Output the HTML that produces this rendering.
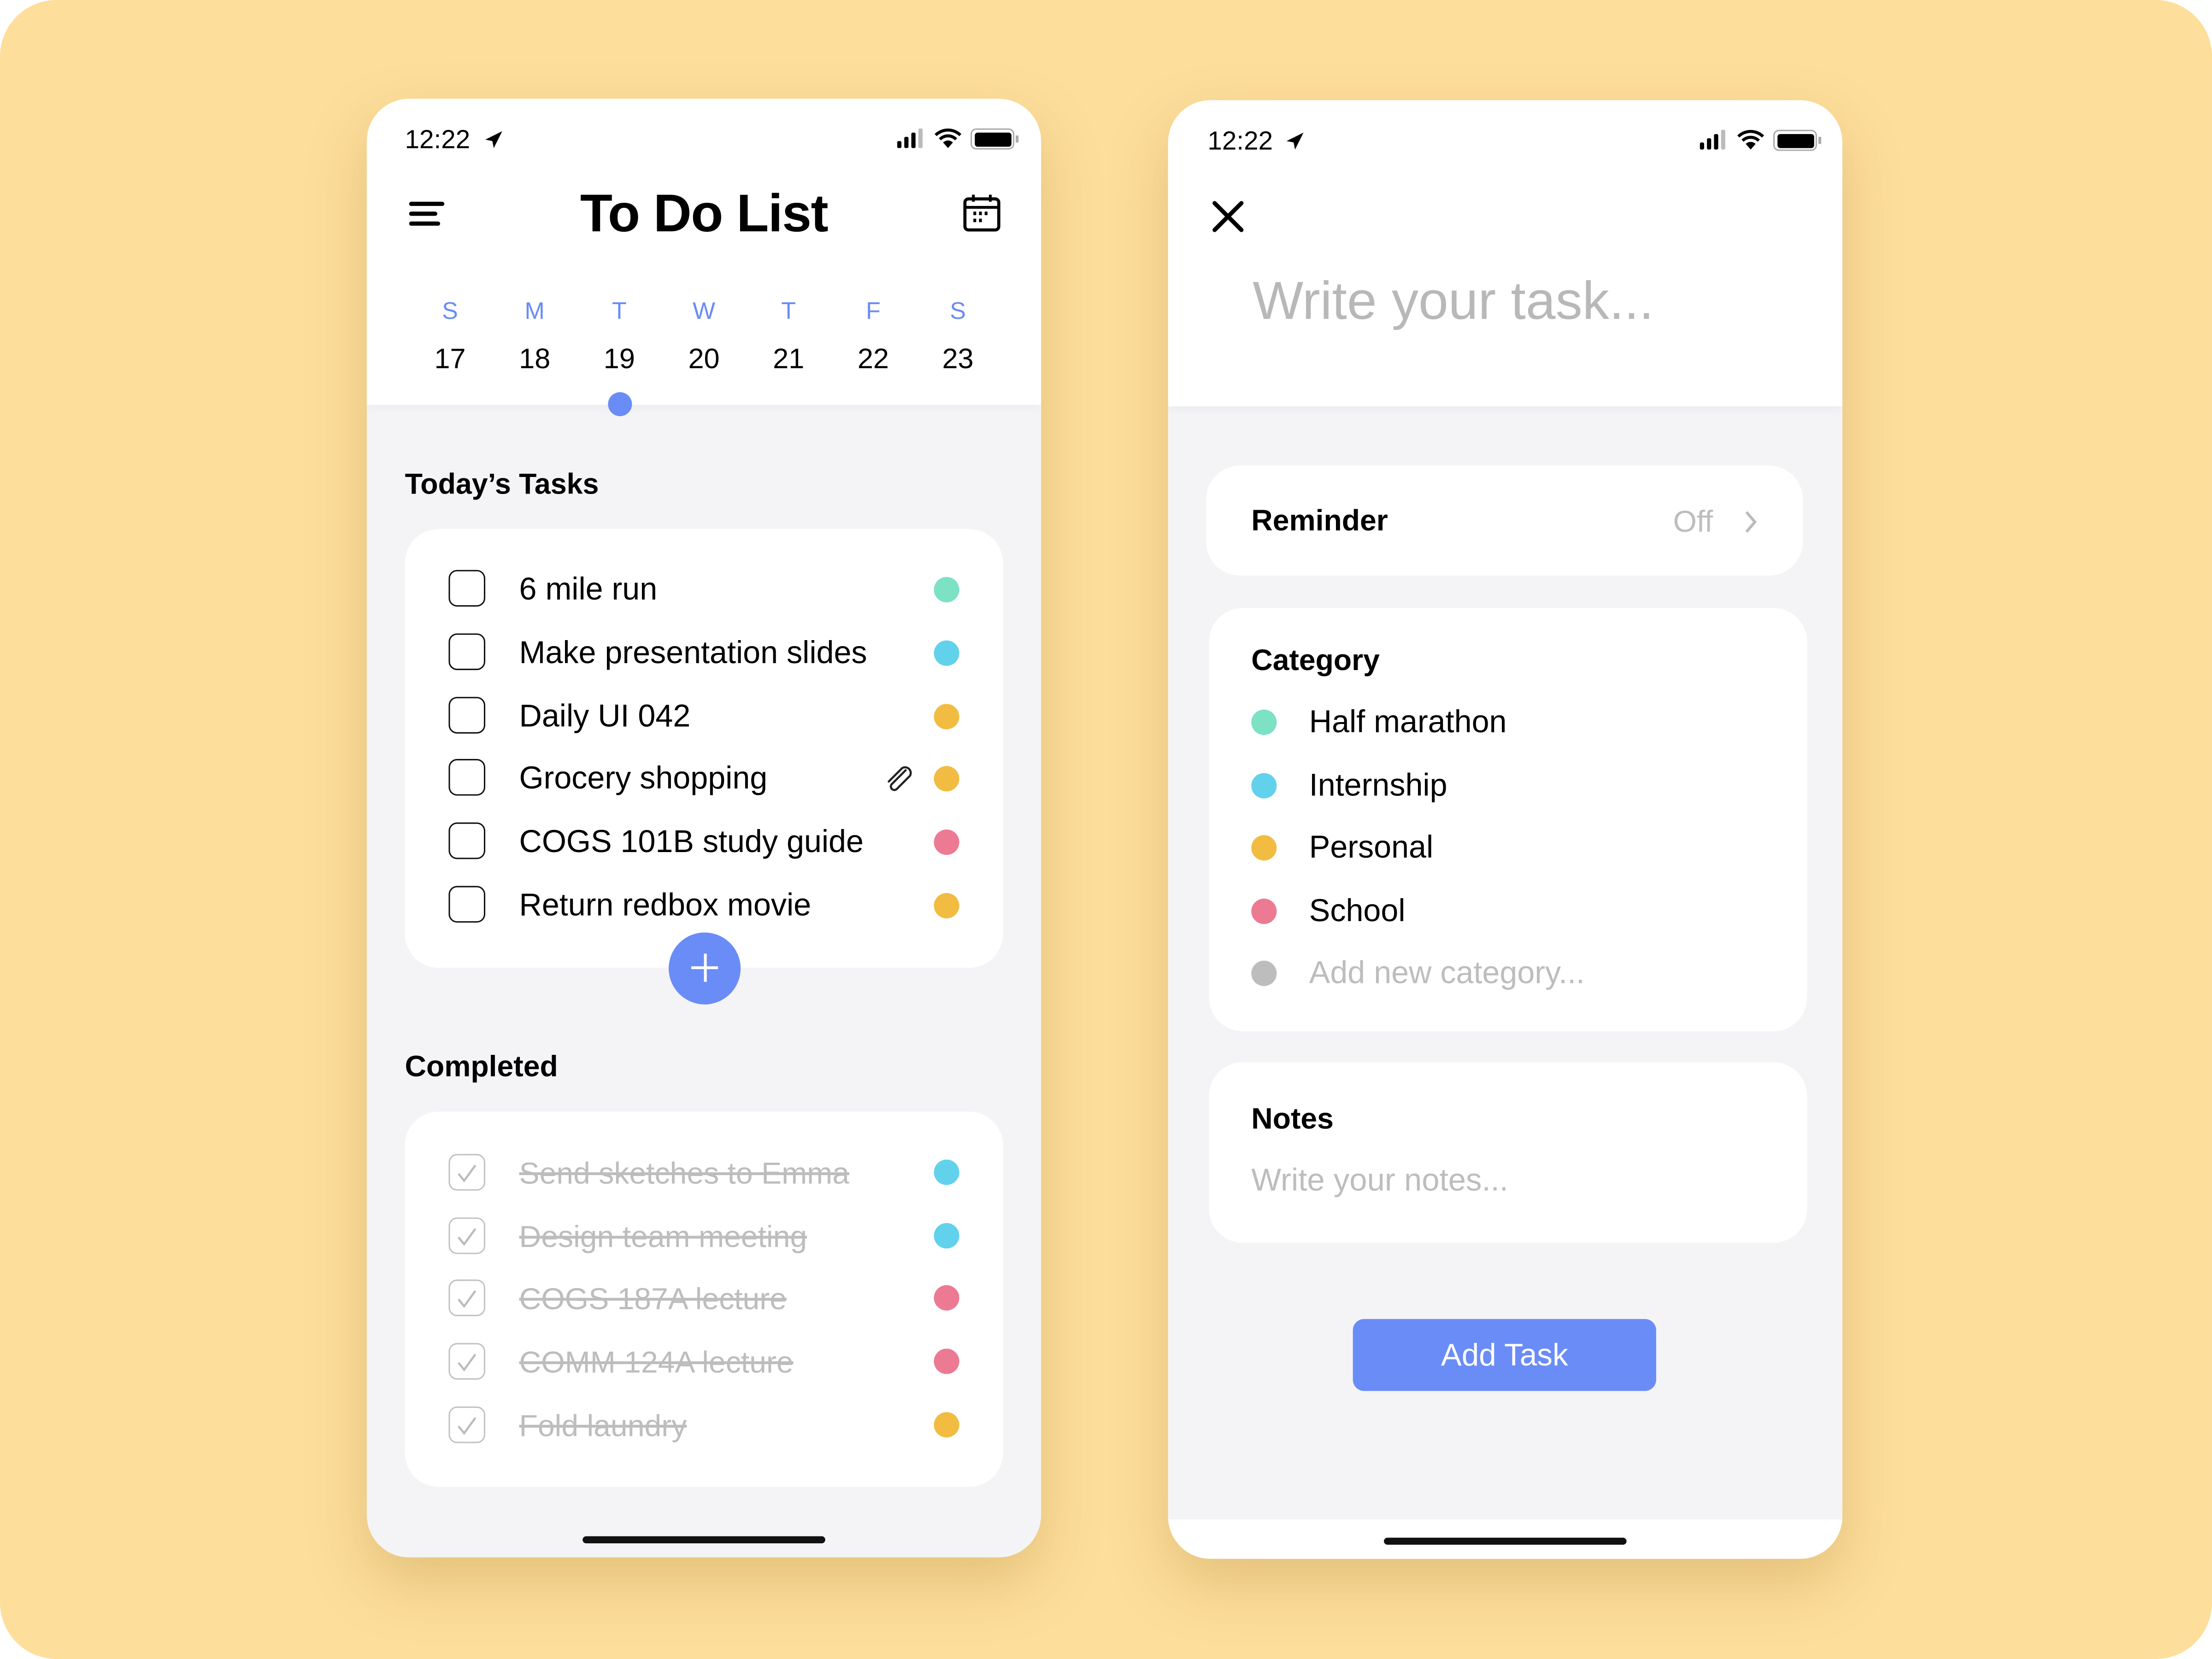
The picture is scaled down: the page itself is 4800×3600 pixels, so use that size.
<!DOCTYPE html>
<html><head><meta charset="utf-8"><style>
*{margin:0;padding:0;box-sizing:border-box}
html,body{width:4800px;height:3600px;overflow:hidden;background:#fff}
#s{position:absolute;left:0;top:0;width:1568px;height:1176px;transform:scale(3.0612);transform-origin:0 0;background:#FDDE9B;border-radius:40px;font-family:"Liberation Sans",sans-serif;color:#000}
.a{position:absolute}
.ph{position:absolute;width:478px;height:1034px;border-radius:30px;background:#F4F4F6;overflow:hidden;box-shadow:0 18px 50px rgba(160,120,40,0.28)}
.top{position:absolute;left:0;top:0;width:100%;height:217px;background:#fff;box-shadow:0 2px 6px rgba(0,0,0,0.04)}
.t{position:absolute;height:30px;line-height:30px;white-space:nowrap}
.card{position:absolute;background:#fff;border-radius:24px}
.cb{position:absolute;width:26px;height:26px;border:1.6px solid #111;border-radius:6px}
.cb.d{border-color:#c2c2c2}
.dot{position:absolute;width:18px;height:18px;border-radius:50%}
.g{background:#7DE1C4}.c{background:#62D1EC}.y{background:#F2BC42}.p{background:#EC7A93}.gr{background:#BDBDBD}
.done{color:#bdbdbd;text-decoration:line-through;text-decoration-color:#bdbdbd}
.hi{position:absolute;width:172px;height:5px;border-radius:3px;background:#111;bottom:10px}
.tk{font-size:22.3px}
.ct{font-size:21.6px}
</style></head><body><div id="s">

<!-- LEFT PHONE -->
<div class="ph" style="left:260px;top:70px">
 <div class="top" style="height:217px"></div>
 <div class="t" style="left:27px;top:14px;font-size:18.5px">12:22</div>
 <svg class="a" style="left:82px;top:21px" width="16" height="16" viewBox="0 0 16 16"><path d="M14 2 L2 8 L7 9 L8 14 Z" fill="#000"/></svg>
 <svg class="a" style="left:375px;top:21px" width="24" height="14" viewBox="0 0 24 14"><rect x="1" y="9" width="3" height="5" rx="1"/><rect x="6" y="6" width="3" height="8" rx="1"/><rect x="11" y="3" width="3" height="11" rx="1"/><rect x="16" y="0" width="3" height="14" rx="1" fill="#bbb"/></svg>
 <svg class="a" style="left:402px;top:20px" width="20" height="16" viewBox="0 0 20 16"><path d="M10 15 L6.5 11 A5 5 0 0 1 13.5 11 Z M3.5 8 A9 9 0 0 1 16.5 8 L15 9.5 A7 7 0 0 0 5 9.5 Z M0.5 5 A13.5 13.5 0 0 1 19.5 5 L18 6.5 A11.5 11.5 0 0 0 2 6.5 Z" fill="#000"/></svg>
 <div class="a" style="left:428px;top:21px;width:31px;height:15px;border:1.5px solid #aaa;border-radius:4px;padding:1.5px"><div style="width:100%;height:100%;background:#000;border-radius:2px"></div></div>
 <div class="a" style="left:460px;top:26px;width:2px;height:5px;background:#aaa"></div>
 <div class="a" style="left:30px;top:73px;width:25px;height:3px;background:#000;border-radius:2px"></div>
 <div class="a" style="left:30px;top:80px;width:20px;height:3px;background:#000;border-radius:2px"></div>
 <div class="a" style="left:30px;top:87px;width:22px;height:3px;background:#000;border-radius:2px"></div>
 <div class="t" style="left:0;width:478px;text-align:center;top:60px;height:42px;line-height:42px;font-size:37.5px;font-weight:bold;letter-spacing:-0.5px">To Do List</div>
 <svg class="a" style="left:422px;top:67px" width="28" height="28" viewBox="0 0 28 28"><rect x="2" y="4" width="24" height="22" rx="2.5" fill="none" stroke="#000" stroke-width="2.2"/><line x1="2" y1="10" x2="26" y2="10" stroke="#000" stroke-width="2"/><line x1="8" y1="1" x2="8" y2="6" stroke="#000" stroke-width="2"/><line x1="20" y1="1" x2="20" y2="6" stroke="#000" stroke-width="2"/><rect x="8" y="13" width="2" height="2.5"/><rect x="12" y="13" width="2" height="2.5"/><rect x="16" y="13" width="2" height="2.5"/><rect x="8" y="18" width="2" height="2.5"/><rect x="12" y="18" width="2" height="2.5"/></svg>
 <div class="a" style="left:29px;top:136px;width:420px;font-size:17px;color:#6A8CF7">
  <span class="t" style="left:0;width:60px;text-align:center">S</span><span class="t" style="left:60px;width:60px;text-align:center">M</span><span class="t" style="left:120px;width:60px;text-align:center">T</span><span class="t" style="left:180px;width:60px;text-align:center">W</span><span class="t" style="left:240px;width:60px;text-align:center">T</span><span class="t" style="left:300px;width:60px;text-align:center">F</span><span class="t" style="left:360px;width:60px;text-align:center">S</span>
 </div>
 <div class="a" style="left:29px;top:170px;width:420px;font-size:20px">
  <span class="t" style="left:0;width:60px;text-align:center">17</span><span class="t" style="left:60px;width:60px;text-align:center">18</span><span class="t" style="left:120px;width:60px;text-align:center">19</span><span class="t" style="left:180px;width:60px;text-align:center">20</span><span class="t" style="left:240px;width:60px;text-align:center">21</span><span class="t" style="left:300px;width:60px;text-align:center">22</span><span class="t" style="left:360px;width:60px;text-align:center">23</span>
 </div>
 <div class="a" style="left:171px;top:208px;width:17px;height:17px;border-radius:50%;background:#6A8CF7"></div>
 <div class="t" style="left:27px;top:259px;font-size:20.5px;font-weight:bold">Today’s Tasks</div>
 <div class="card" style="left:27px;top:305px;width:424px;height:311px"></div>
 <div class="cb" style="left:58px;top:334px"></div><div class="t tk" style="left:108px;top:333px">6 mile run</div><div class="dot g" style="left:402px;top:339px"></div>
 <div class="cb" style="left:58px;top:379px"></div><div class="t tk" style="left:108px;top:378px">Make presentation slides</div><div class="dot c" style="left:402px;top:384px"></div>
 <div class="cb" style="left:58px;top:424px"></div><div class="t tk" style="left:108px;top:423px">Daily UI 042</div><div class="dot y" style="left:402px;top:429px"></div>
 <div class="cb" style="left:58px;top:468px"></div><div class="t tk" style="left:108px;top:467px">Grocery shopping</div><div class="dot y" style="left:402px;top:473px"></div>
 <svg class="a" style="left:366px;top:472px" width="22" height="20" viewBox="0 0 22 20"><path d="M16 4 L6 14 A2.5 2.5 0 0 0 9.5 17.5 L19 8 A4 4 0 0 0 13.5 2.5 L4 12" fill="none" stroke="#222" stroke-width="1.5" stroke-linecap="round"/></svg>
 <div class="cb" style="left:58px;top:513px"></div><div class="t tk" style="left:108px;top:512px">COGS 101B study guide</div><div class="dot p" style="left:402px;top:518px"></div>
 <div class="cb" style="left:58px;top:558px"></div><div class="t tk" style="left:108px;top:557px">Return redbox movie</div><div class="dot y" style="left:402px;top:563px"></div>
 <div class="a" style="left:214px;top:591px;width:51px;height:51px;border-radius:50%;background:#6A8CF7"></div>
 <div class="a" style="left:230px;top:615px;width:19px;height:2px;background:#fff"></div>
 <div class="a" style="left:238.5px;top:606px;width:2px;height:20px;background:#fff"></div>
 <div class="t" style="left:27px;top:672px;font-size:21px;font-weight:bold">Completed</div>
 <div class="card" style="left:27px;top:718px;width:424px;height:266px"></div>
 <div class="cb d" style="left:58px;top:748px"></div><svg class="a" style="left:63px;top:755px" width="16" height="14"><path d="M2 7 L6 12 L14 1" fill="none" stroke="#bbb" stroke-width="1.5"/></svg><div class="t done ct" style="left:108px;top:747px">Send sketches to Emma</div><div class="dot c" style="left:402px;top:752px"></div>
 <div class="cb d" style="left:58px;top:793px"></div><svg class="a" style="left:63px;top:800px" width="16" height="14"><path d="M2 7 L6 12 L14 1" fill="none" stroke="#bbb" stroke-width="1.5"/></svg><div class="t done ct" style="left:108px;top:792px">Design team meeting</div><div class="dot c" style="left:402px;top:797px"></div>
 <div class="cb d" style="left:58px;top:837px"></div><svg class="a" style="left:63px;top:844px" width="16" height="14"><path d="M2 7 L6 12 L14 1" fill="none" stroke="#bbb" stroke-width="1.5"/></svg><div class="t done ct" style="left:108px;top:836px">COGS 187A lecture</div><div class="dot p" style="left:402px;top:841px"></div>
 <div class="cb d" style="left:58px;top:882px"></div><svg class="a" style="left:63px;top:889px" width="16" height="14"><path d="M2 7 L6 12 L14 1" fill="none" stroke="#bbb" stroke-width="1.5"/></svg><div class="t done ct" style="left:108px;top:881px">COMM 124A lecture</div><div class="dot p" style="left:402px;top:886px"></div>
 <div class="cb d" style="left:58px;top:927px"></div><svg class="a" style="left:63px;top:934px" width="16" height="14"><path d="M2 7 L6 12 L14 1" fill="none" stroke="#bbb" stroke-width="1.5"/></svg><div class="t done ct" style="left:108px;top:926px">Fold laundry</div><div class="dot y" style="left:402px;top:931px"></div>
 <div class="hi" style="left:153px"></div>
</div>

<!-- RIGHT PHONE -->
<div class="ph" style="left:828px;top:71px">
 <div class="top"></div>
 <div class="t" style="left:28px;top:14px;font-size:18.5px">12:22</div>
 <svg class="a" style="left:82px;top:21px" width="16" height="16" viewBox="0 0 16 16"><path d="M14 2 L2 8 L7 9 L8 14 Z" fill="#000"/></svg>
 <svg class="a" style="left:376px;top:21px" width="24" height="14" viewBox="0 0 24 14"><rect x="1" y="9" width="3" height="5" rx="1"/><rect x="6" y="6" width="3" height="8" rx="1"/><rect x="11" y="3" width="3" height="11" rx="1"/><rect x="16" y="0" width="3" height="14" rx="1" fill="#bbb"/></svg>
 <svg class="a" style="left:403px;top:20px" width="20" height="16" viewBox="0 0 20 16"><path d="M10 15 L6.5 11 A5 5 0 0 1 13.5 11 Z M3.5 8 A9 9 0 0 1 16.5 8 L15 9.5 A7 7 0 0 0 5 9.5 Z M0.5 5 A13.5 13.5 0 0 1 19.5 5 L18 6.5 A11.5 11.5 0 0 0 2 6.5 Z" fill="#000"/></svg>
 <div class="a" style="left:429px;top:21px;width:31px;height:15px;border:1.5px solid #aaa;border-radius:4px;padding:1.5px"><div style="width:100%;height:100%;background:#000;border-radius:2px"></div></div>
 <div class="a" style="left:461px;top:26px;width:2px;height:5px;background:#aaa"></div>
 <svg class="a" style="left:31px;top:71px" width="23" height="23" viewBox="0 0 23 23"><path d="M2 2 L21 21 M21 2 L2 21" stroke="#000" stroke-width="3" stroke-linecap="round"/></svg>
 <div class="t" style="left:60px;top:120px;height:46px;line-height:46px;font-size:38px;color:#B8B8B8">Write your task...</div>
 <div class="card" style="left:27px;top:259px;width:423px;height:78px"></div>
 <div class="t" style="left:59px;top:284px;font-size:21px;font-weight:bold">Reminder</div>
 <div class="t" style="left:358px;top:284px;font-size:21.5px;color:#bdbdbd">Off</div>
 <svg class="a" style="left:407px;top:290px" width="12" height="18"><path d="M3 2 L9 9 L3 16" fill="none" stroke="#bbb" stroke-width="2"/></svg>
 <div class="card" style="left:29px;top:360px;width:424px;height:300px"></div>
 <div class="t" style="left:59px;top:383px;font-size:21px;font-weight:bold">Category</div>
 <div class="dot g" style="left:59px;top:432px"></div><div class="t tk" style="left:100px;top:426px">Half marathon</div>
 <div class="dot c" style="left:59px;top:477px"></div><div class="t tk" style="left:100px;top:471px">Internship</div>
 <div class="dot y" style="left:59px;top:521px"></div><div class="t tk" style="left:100px;top:515px">Personal</div>
 <div class="dot p" style="left:59px;top:566px"></div><div class="t tk" style="left:100px;top:560px">School</div>
 <div class="dot gr" style="left:59px;top:610px"></div><div class="t tk" style="left:100px;top:604px;color:#bdbdbd">Add new category...</div>
 <div class="card" style="left:29px;top:682px;width:424px;height:128px"></div>
 <div class="t" style="left:59px;top:708px;font-size:21px;font-weight:bold">Notes</div>
 <div class="t" style="left:59px;top:751px;font-size:22.5px;color:#bdbdbd">Write your notes...</div>
 <div class="a" style="left:131px;top:864px;width:215px;height:51px;border-radius:8px;background:#6A8CF7;color:#fff;font-size:22px;font-weight:500;text-align:center;line-height:51px">Add Task</div>
 <div class="a" style="left:0;top:1006px;width:100%;height:28px;background:#fff"></div>
 <div class="hi" style="left:153px"></div>
</div>
</div></body></html>
